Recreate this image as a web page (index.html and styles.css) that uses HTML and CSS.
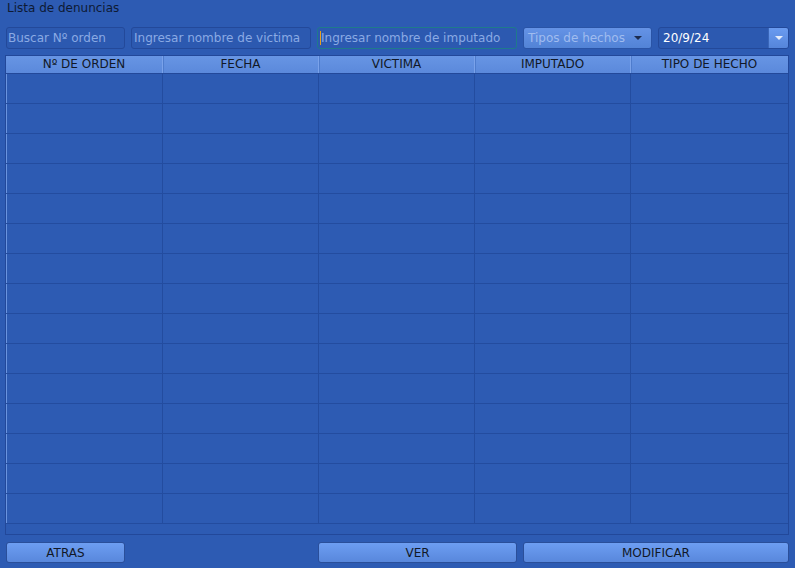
FILE: index.html
```html
<!DOCTYPE html>
<html>
<head>
<meta charset="utf-8">
<link rel="stylesheet" href="styles.css">
</head>
<body>
<div class="app">
  <div class="title">Lista de denuncias</div>
  <div class="filters">
    <div class="field f1"><span class="ph">Buscar Nº orden</span></div>
    <div class="field f2"><span class="ph">Ingresar nombre de victima</span></div>
    <div class="field f3 focus"><span class="caret"></span><span class="ph">Ingresar nombre de imputado</span></div>
    <div class="combo"><span class="ph">Tipos de hechos</span><span class="arrow"></span></div>
    <div class="date"><span class="val">20/9/24</span><span class="dbtn"><span class="warrow"></span></span></div>
  </div>
  <div class="table">
    <div class="thead">
      <div class="th">Nº DE ORDEN</div>
      <div class="th">FECHA</div>
      <div class="th">VICTIMA</div>
      <div class="th">IMPUTADO</div>
      <div class="th">TIPO DE HECHO</div>
    </div>
    <div class="tbody">
      <div class="tr"><div class="td"></div><div class="td"></div><div class="td"></div><div class="td"></div><div class="td"></div></div>
      <div class="tr"><div class="td"></div><div class="td"></div><div class="td"></div><div class="td"></div><div class="td"></div></div>
      <div class="tr"><div class="td"></div><div class="td"></div><div class="td"></div><div class="td"></div><div class="td"></div></div>
      <div class="tr"><div class="td"></div><div class="td"></div><div class="td"></div><div class="td"></div><div class="td"></div></div>
      <div class="tr"><div class="td"></div><div class="td"></div><div class="td"></div><div class="td"></div><div class="td"></div></div>
      <div class="tr"><div class="td"></div><div class="td"></div><div class="td"></div><div class="td"></div><div class="td"></div></div>
      <div class="tr"><div class="td"></div><div class="td"></div><div class="td"></div><div class="td"></div><div class="td"></div></div>
      <div class="tr"><div class="td"></div><div class="td"></div><div class="td"></div><div class="td"></div><div class="td"></div></div>
      <div class="tr"><div class="td"></div><div class="td"></div><div class="td"></div><div class="td"></div><div class="td"></div></div>
      <div class="tr"><div class="td"></div><div class="td"></div><div class="td"></div><div class="td"></div><div class="td"></div></div>
      <div class="tr"><div class="td"></div><div class="td"></div><div class="td"></div><div class="td"></div><div class="td"></div></div>
      <div class="tr"><div class="td"></div><div class="td"></div><div class="td"></div><div class="td"></div><div class="td"></div></div>
      <div class="tr"><div class="td"></div><div class="td"></div><div class="td"></div><div class="td"></div><div class="td"></div></div>
      <div class="tr"><div class="td"></div><div class="td"></div><div class="td"></div><div class="td"></div><div class="td"></div></div>
      <div class="tr"><div class="td"></div><div class="td"></div><div class="td"></div><div class="td"></div><div class="td"></div></div>
    </div>
  </div>
  <div class="actions">
    <button class="btn b-atras">ATRAS</button>
    <button class="btn b-ver">VER</button>
    <button class="btn b-mod">MODIFICAR</button>
  </div>
</div>
</body>
</html>
```
FILE: styles.css
```css
* { box-sizing: border-box; }
html, body {
  margin: 0;
  padding: 0;
  width: 795px;
  height: 568px;
  overflow: hidden;
  background: #2d5bb3;
  font-family: "DejaVu Sans", "Liberation Sans", sans-serif;
}
.app {
  width: 795px;
  height: 568px;
  display: flex;
  flex-direction: column;
}
.title {
  height: 27px;
  padding: 1px 0 0 7px;
  font-size: 12px;
  line-height: 14px;
  color: #0e1a33;
}
.filters {
  display: flex;
  height: 22px;
  padding-left: 6px;
  gap: 6px;
}
.field {
  height: 22px;
  border: 1px solid #23499a;
  border-radius: 3px;
  background: #2c59b0;
  display: flex;
  align-items: center;
  padding-left: 1px;
  font-size: 12px;
}
.f1 { width: 119px; }
.f2 { width: 180px; padding-left: 2px; }
.f3 { width: 200px; padding-left: 2px; }
.focus { border-color: #1f7a8c; }
.caret {
  width: 1px;
  height: 14px;
  background: #e8a020;
}
.ph { color: #8aaae4; white-space: nowrap; }
.combo {
  width: 129px;
  height: 22px;
  border: 1px solid #2a54a6;
  border-radius: 3px;
  background: linear-gradient(#6593e6, #5283d6);
  display: flex;
  align-items: center;
  justify-content: space-between;
  padding: 0 9px 0 4px;
  font-size: 12px;
}
.combo .ph { color: #a0bcef; }
.arrow {
  width: 0; height: 0;
  border-left: 4px solid transparent;
  border-right: 4px solid transparent;
  border-top: 4px solid #1c2c50;
}
.date {
  width: 131px;
  height: 22px;
  border: 1px solid #23499a;
  border-radius: 3px;
  background: #2c59b0;
  display: flex;
  align-items: center;
  justify-content: space-between;
  font-size: 12px;
  padding-left: 4px;
}
.val { color: #ffffff; }
.dbtn {
  width: 20px;
  height: 20px;
  background: linear-gradient(#6a9bf0, #5585da);
  border-radius: 0 2px 2px 0;
  border-left: 1px solid #3a66b8;
  display: flex;
  align-items: center;
  justify-content: center;
}
.warrow {
  width: 0; height: 0;
  border-left: 4px solid transparent;
  border-right: 4px solid transparent;
  border-top: 4px solid #e4ecfb;
}
.table {
  margin: 6px 6px 0 5px;
  height: 480px;
  border: 1px solid #22489a;
  display: flex;
  flex-direction: column;
}
.thead {
  display: grid;
  grid-template-columns: 157px 156px 156px 156px 157px;
  height: 18px;
  background: linear-gradient(#6795e4, #5b89db);
  border-bottom: 1px solid #23499a;
}
.th {
  font-size: 12px;
  line-height: 17px;
  text-align: center;
  color: #111827;
  border-right: 1px solid #7aa2ea;
  box-shadow: inset 1px 0 0 #4e7ccd;
}
.th:first-child { box-shadow: none; }
.th:last-child { border-right: none; }
.tbody { flex: 1; }
.tr {
  display: grid;
  grid-template-columns: 157px 156px 156px 156px 157px;
  height: 30px;
  border-bottom: 1px solid #234c9f;
}
.td { border-right: 1px solid #234c9f; }
.td:first-child { border-left: 1px solid #6a94df; }
.td:last-child { border-right: none; }
.actions {
  display: flex;
  padding: 7px 6px 0 6px;
  gap: 6px;
}
.btn {
  height: 21px;
  border: 1px solid #2a4f9a;
  border-radius: 3px;
  background: linear-gradient(#6d9ef2, #5887dc);
  font-family: "DejaVu Sans", "Liberation Sans", sans-serif;
  font-size: 12px;
  color: #111827;
  padding: 0;
}
.b-atras { width: 119px; }
.b-ver { width: 199px; margin-left: auto; }
.b-mod { width: 266px; }
```
